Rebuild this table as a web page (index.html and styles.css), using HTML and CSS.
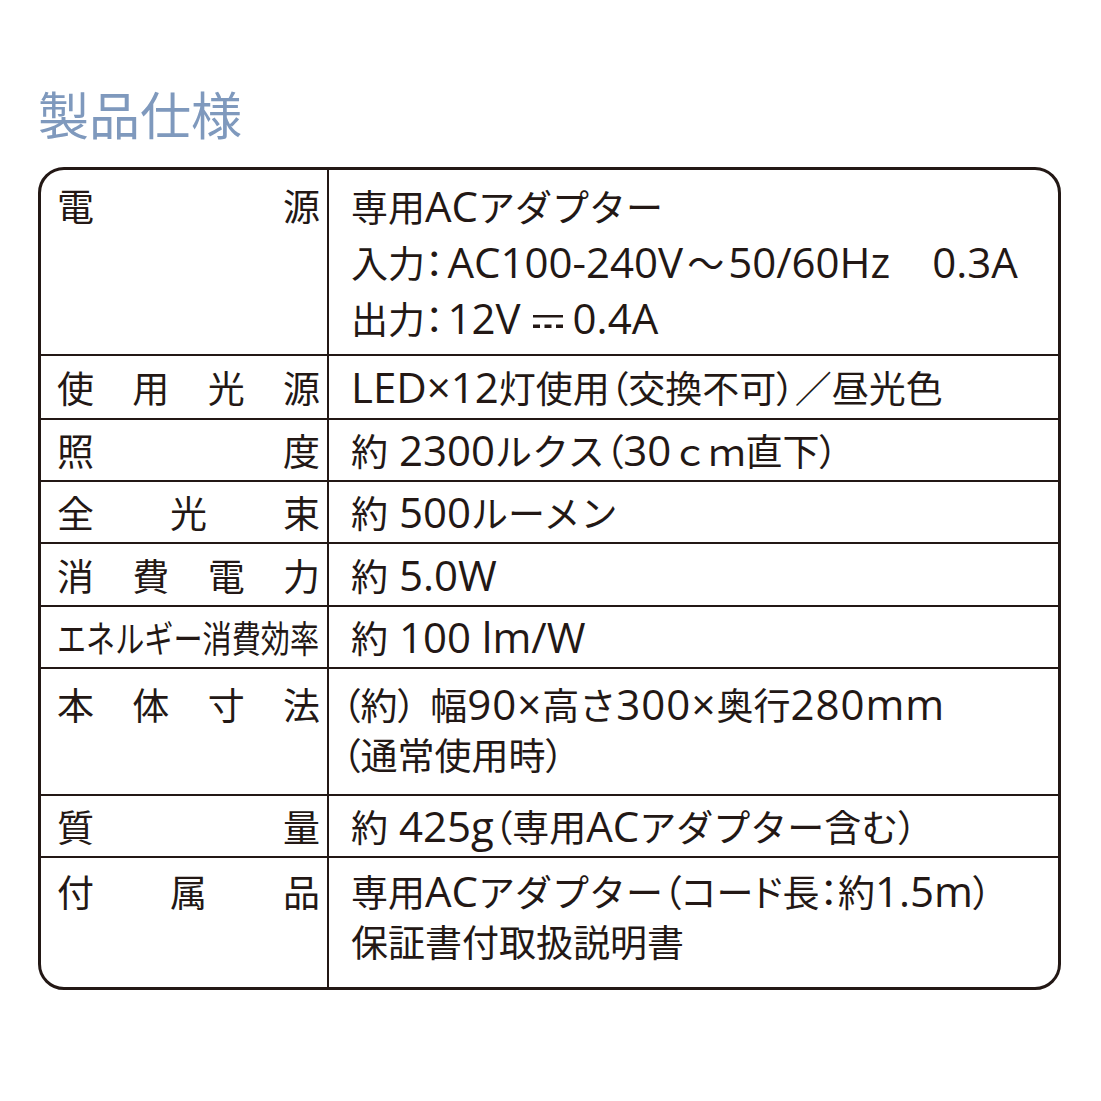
FILE: index.html
```html
<!DOCTYPE html>
<html lang="ja">
<head>
<meta charset="utf-8">
<title>製品仕様</title>
<link rel="stylesheet" href="styles.css">
</head>
<body>
<h1 class="title">製品仕様</h1>
<div class="spec">
  <div class="row row-power">
    <div class="label top"><span>電</span><span>源</span></div>
    <div class="value top lh55">
      <div>専用<span class="en">AC</span>アダプター</div>
      <div>入力<span class="palt colon">：</span><span class="en">AC100-240V</span><span class="wave">～</span><span class="en">50/60Hz</span>　<span class="en gap">0.3A</span></div>
      <div>出力<span class="palt colon">：</span><span class="en">12V</span><svg class="dc" width="30" height="14" viewBox="0 0 30 14"><rect x="0" y="0" width="30" height="2.5"/><rect x="0" y="9.5" width="7" height="3.5"/><rect x="11.5" y="9.5" width="7" height="3.5"/><rect x="23" y="9.5" width="7" height="3.5"/></svg><span class="en">0.4A</span></div>
    </div>
  </div>
  <div class="row h64">
    <div class="label"><span>使</span><span>用</span><span>光</span><span>源</span></div>
    <div class="value"><div><span class="en">LED×12</span>灯使用<span class="palt">（</span>交換不可<span class="palt">）</span>／昼光色</div></div>
  </div>
  <div class="row h62">
    <div class="label"><span>照</span><span>度</span></div>
    <div class="value"><div>約<span class="en"> 2300</span>ルクス<span class="palt">（</span><span class="en">30</span>ｃｍ直下<span class="palt">）</span></div></div>
  </div>
  <div class="row h62">
    <div class="label"><span>全</span><span>光</span><span>束</span></div>
    <div class="value"><div>約<span class="en"> 500</span>ルーメン</div></div>
  </div>
  <div class="row h63">
    <div class="label"><span>消</span><span>費</span><span>電</span><span>力</span></div>
    <div class="value"><div>約<span class="en"> 5.0W</span></div></div>
  </div>
  <div class="row h62">
    <div class="label"><span class="squeeze">エネルギー消費効率</span></div>
    <div class="value"><div>約<span class="en"> 100 lm/W</span></div></div>
  </div>
  <div class="row h127">
    <div class="label top"><span>本</span><span>体</span><span>寸</span><span>法</span></div>
    <div class="value top">
      <div><span class="palt lead">（</span>約<span class="palt">）</span><span class="sp"> </span>幅<span class="en wide">90×</span>高さ<span class="en wide">300×</span>奥行<span class="en wide">280mm</span></div>
      <div><span class="palt lead">（</span>通常使用時<span class="palt">）</span></div>
    </div>
  </div>
  <div class="row h62">
    <div class="label"><span>質</span><span>量</span></div>
    <div class="value"><div>約<span class="en"> 425g</span><span class="palt">（</span>専用<span class="en">AC</span>アダプター含む<span class="palt">）</span></div></div>
  </div>
  <div class="row h129 last">
    <div class="label top t8"><span>付</span><span>属</span><span>品</span></div>
    <div class="value top t8">
      <div>専用<span class="en">AC</span>アダプター<span class="palt">（コード</span>長<span class="palt">：</span>約<span class="en">1.5m</span><span class="palt">）</span></div>
      <div>保証書付取扱説明書</div>
    </div>
  </div>
</div>
</body>
</html>
```

FILE: styles.css
```css
* {
  box-sizing: border-box;
}

html, body {
  margin: 0;
  padding: 0;
  background: #ffffff;
}

body {
  font-family: "Noto Sans CJK JP", "Noto Sans", sans-serif;
  color: #231815;
  width: 1101px;
}

.title {
  margin: 83px 0 0 38px;
  font-size: 51px;
  line-height: 60px;
  font-weight: 400;
  color: #7f99bd;
  letter-spacing: 0;
}

.spec {
  margin: 24px 0 0 38px;
  width: 1023px;
  border: 3px solid #231815;
  border-radius: 26px;
  display: flex;
  flex-direction: column;
  overflow: hidden;
}

.row {
  display: grid;
  grid-template-columns: 288px 1fr;
  border-bottom: 2px solid #231815;
}

.row.last {
  border-bottom: none;
}

.row-power { height: 186px; }
.h64 { height: 64px; }
.h62 { height: 62px; }
.h63 { height: 63px; }
.h127 { height: 127px; }
.h129 { height: 129px; }

.label {
  display: flex;
  justify-content: space-between;
  align-items: center;
  padding: 0 7px 0 16px;
  border-right: 2px solid #231815;
  font-size: 37px;
  line-height: 50px;
  white-space: nowrap;
}

.label.top {
  align-items: flex-start;
  padding-top: 10px;
}

.squeeze {
  display: inline-block;
  transform: scaleX(0.787);
  transform-origin: left center;
}

.value {
  display: flex;
  flex-direction: column;
  justify-content: center;
  padding-left: 22px;
  font-size: 37px;
  line-height: 50px;
  white-space: nowrap;
}

.value.top {
  justify-content: flex-start;
  padding-top: 10px;
}

.label.t8,
.value.t8 {
  padding-top: 8px;
}

.value.lh55 {
  line-height: 55px;
  padding-top: 8px;
}

.en {
  font-family: "Open Sans", "Noto Sans", sans-serif;
  font-size: 42px;
}

.en.wide {
  letter-spacing: 1px;
}

.palt {
  font-feature-settings: "palt";
}

.colon {
  margin-right: 4px;
}

.wave {
  margin: 0 4px;
}

.gap {
  margin-left: 5px;
}

.sp {
  margin-right: 6px;
}

.lead {
  margin-left: -9px;
}

.dc {
  fill: #231815;
  vertical-align: 5px;
  margin: 0 10px 0 12px;
}
```
